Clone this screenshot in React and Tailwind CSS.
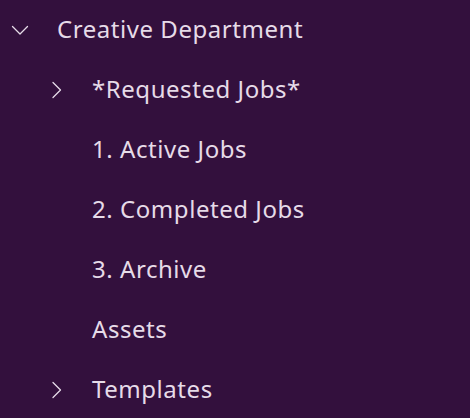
import React from 'react';

const Chevron = ({ open }) => (
    <svg width="18" height="18" viewBox="0 0 18 18" fill="none" stroke="currentColor" strokeWidth="1.3" strokeLinecap="round" strokeLinejoin="round">
        {open ? <path d="M1.5 5.5l7.5 7.5 7.5-7.5" /> : <path d="M5 1.5l7.5 7.5-7.5 7.5" />}
    </svg>
);

const items = [
    { label: '*Requested Jobs*', chevron: true },
    { label: '1. Active Jobs' },
    { label: '2. Completed Jobs' },
    { label: '3. Archive' },
    { label: 'Assets' },
    { label: 'Templates', chevron: true },
];

const App = () => {
    return (
        <div className="w-[470px] h-[418px] bg-[#33103d] text-[#e6dbe8] overflow-hidden" style={{ fontFamily: "'Noto Sans', sans-serif" }}>
            {/* Top level folder */}
            <div className="h-[60px] flex items-center">
                <div className="w-[57px] pl-[11px] flex items-center"><Chevron open /></div>
                <span className="text-[24px] leading-none tracking-[0.55px] -mt-[2px]">Creative Department</span>
            </div>
            {items.map(item => (
                <div key={item.label} className="h-[60px] flex items-center">
                    <div className="w-[92px] pl-[48px] flex items-center">{item.chevron && <Chevron />}</div>
                    <span className="text-[24px] leading-none tracking-[0.55px] -mt-[2px]">{item.label}</span>
                </div>
            ))}
        </div>
    );
};

export default App;
